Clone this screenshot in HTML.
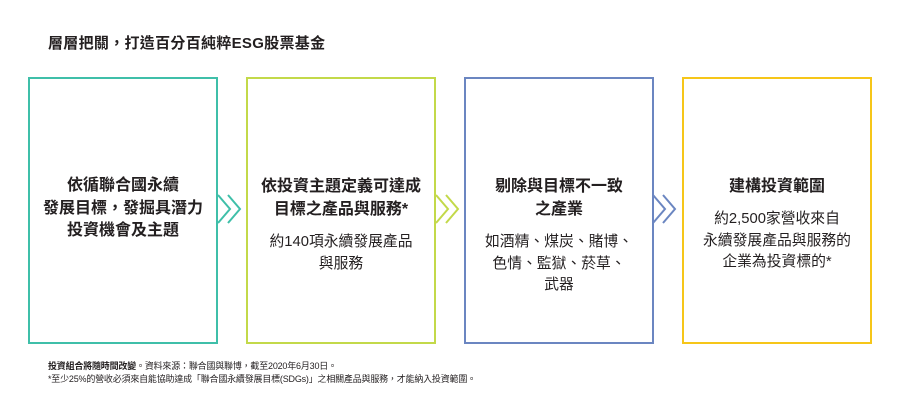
<!DOCTYPE html>
<html><head><meta charset="utf-8"><style>
body{margin:0;width:900px;height:410px;background:#fff;font-family:"Liberation Sans","Noto Sans CJK TC",sans-serif;color:#231f20;position:relative;overflow:hidden}
.h{position:absolute;left:48px;top:32px;font-size:15px;font-weight:bold;letter-spacing:0.3px}
.box{position:absolute;top:77px;width:186px;height:263px;border:2px solid}
.t{position:absolute;left:-10px;width:206px;text-align:center;font-size:16px;font-weight:bold;line-height:22.5px}
.b{position:absolute;left:-10px;width:206px;text-align:center;font-size:14.8px;line-height:21.5px}
svg.c{position:absolute;top:193px}
.f{position:absolute;left:48px;font-size:9px;line-height:11px;letter-spacing:-0.2px}
</style></head><body>
<div class="h">層層把關，打造百分百純粹ESG股票基金</div>

<div class="box" style="left:28px;border-color:#3fbfa9">
 <div class="t" style="top:96px">依循聯合國永續<br>發展目標，發掘具潛力<br>投資機會及主題</div>
</div>
<div class="box" style="left:246px;border-color:#c3d94a">
 <div class="t" style="top:97px">依投資主題定義可達成<br>目標之產品與服務*</div>
 <div class="b" style="top:153px">約140項永續發展產品<br>與服務</div>
</div>
<div class="box" style="left:464px;border-color:#6b86c1">
 <div class="t" style="top:97px">剔除與目標不一致<br>之產業</div>
 <div class="b" style="top:153px">如酒精、煤炭、賭博、<br>色情、監獄、菸草、<br>武器</div>
</div>
<div class="box" style="left:682px;border-color:#f6c619">
 <div class="t" style="top:97px">建構投資範圍</div>
 <div class="b" style="top:130px">約2,500家營收來自<br>永續發展產品與服務的<br>企業為投資標的*</div>
</div>

<svg class="c" style="left:215px" width="30" height="32"><path d="M3 2 L15 16 L3 30 M13 2 L25 16 L13 30" fill="none" stroke="#3fbfa9" stroke-width="2"/></svg>
<svg class="c" style="left:433px" width="30" height="32"><path d="M3 2 L15 16 L3 30 M13 2 L25 16 L13 30" fill="none" stroke="#c3d94a" stroke-width="2"/></svg>
<svg class="c" style="left:650px" width="30" height="32"><path d="M3 2 L15 16 L3 30 M13 2 L25 16 L13 30" fill="none" stroke="#6b86c1" stroke-width="2"/></svg>

<div class="f" style="top:361px"><b>投資組合將隨時間改變</b>。資料來源：聯合國與聯博，截至2020年6月30日。</div>
<div class="f" style="top:374px">*至少25%的營收必須來自能協助達成「聯合國永續發展目標(SDGs)」之相關產品與服務，才能納入投資範圍。</div>
</body></html>
